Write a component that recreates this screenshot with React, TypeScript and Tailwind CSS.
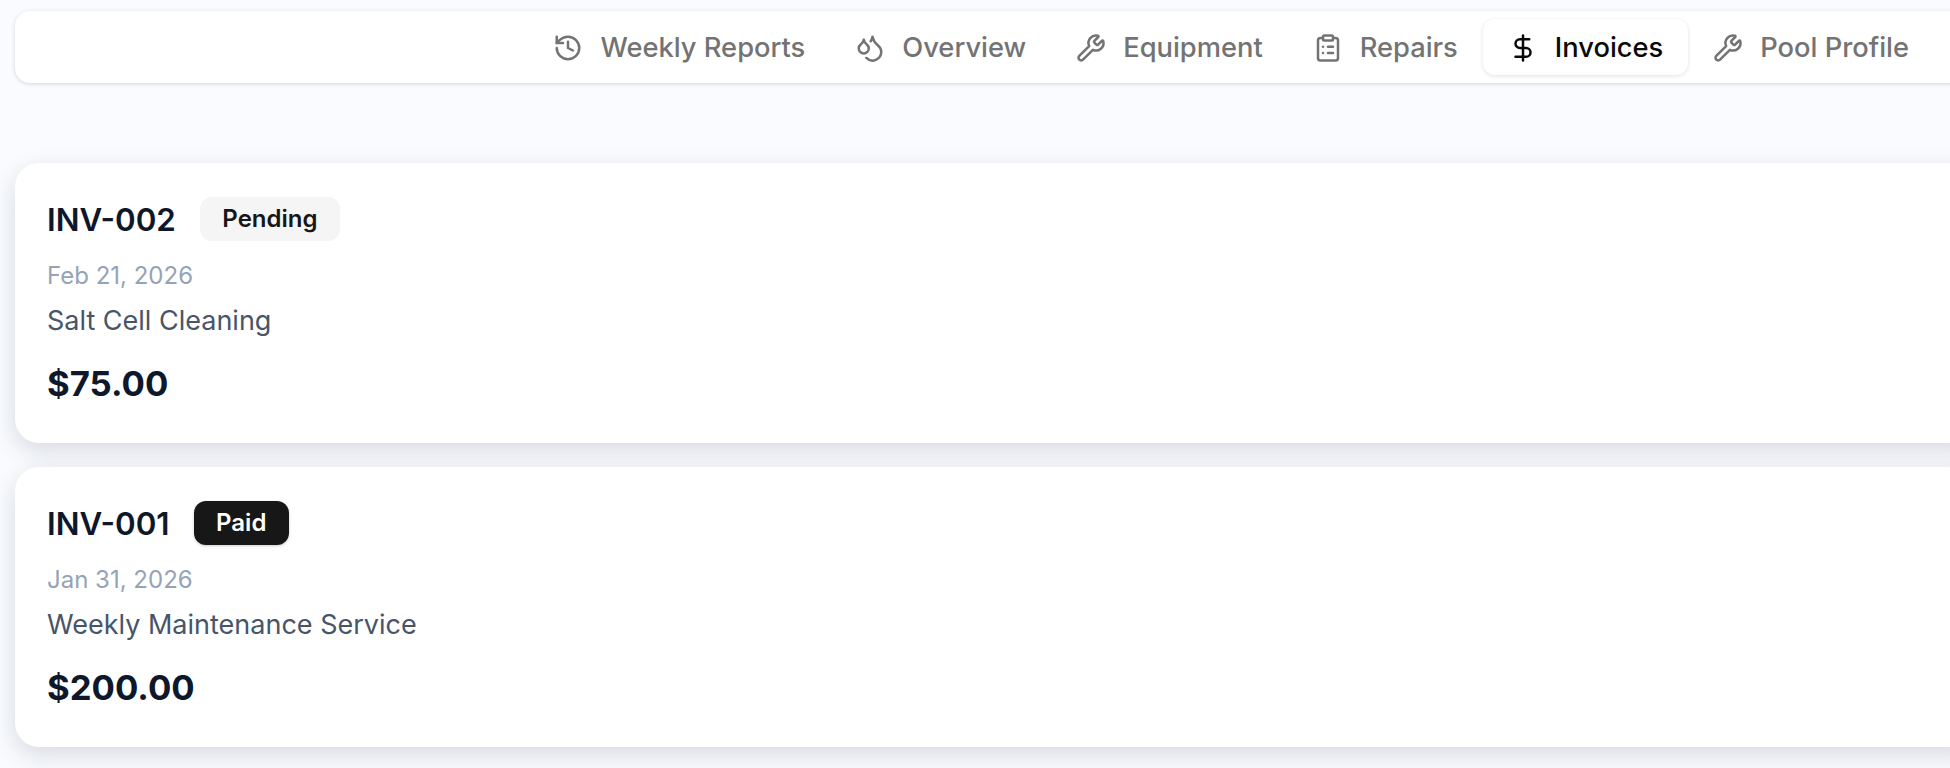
import { ClipboardList, DollarSign, Droplets, History, Wrench } from "lucide-react"

const tabs = [
  { label: "Weekly Reports", icon: History },
  { label: "Overview", icon: Droplets },
  { label: "Equipment", icon: Wrench },
  { label: "Repairs", icon: ClipboardList },
  { label: "Invoices", icon: DollarSign, active: true },
  { label: "Pool Profile", icon: Wrench },
]

const invoices = [
  { id: "INV-002", status: "Pending", date: "Feb 21, 2026", title: "Salt Cell Cleaning", amount: "$75.00" },
  { id: "INV-001", status: "Paid", date: "Jan 31, 2026", title: "Weekly Maintenance Service", amount: "$200.00" },
]

export default function App() {
  return (
    <div className="h-screen w-screen overflow-hidden bg-[#f9fbfe] font-['Inter',sans-serif]">
      <div className="w-[2000px] px-[15px] pt-[11px]">
        {/* Tabs */}
        <nav className="flex h-[72px] items-center justify-end rounded-[15px] bg-white pr-[51px] shadow-[0_1px_4px_rgba(15,23,42,0.16)]">
          {tabs.map((t) => (
            <button
              key={t.label}
              className={
                t.active
                  ? "flex h-[56px] items-center gap-[17px] rounded-[12px] bg-white px-[25px] pt-[2px] text-[27.3px] font-medium text-[#0a0a0a] shadow-[0_1px_4px_rgba(0,0,0,0.12)]"
                  : "flex h-[56px] items-center gap-[17px] rounded-[12px] px-[25px] pt-[2px] text-[27.3px] font-medium text-[#737373]"
              }
            >
              <t.icon className="h-[30px] w-[30px]" strokeWidth={2} />
              {t.label}
            </button>
          ))}
        </nav>

        {/* Invoices */}
        <div className="mt-[80px] flex flex-col gap-[24px]">
          {invoices.map((inv) => (
            <div
              key={inv.id}
              className="h-[280px] rounded-[24px] bg-white px-[32px] pt-[34px] shadow-[0_8px_24px_rgba(15,23,42,0.14)]"
            >
              <div className="flex h-[44px] items-start gap-[24px]">
                <span className="pt-[1px] text-[31.3px] font-semibold leading-[44px] text-[#0f172a]">{inv.id}</span>
                <span
                  className={
                    inv.status === "Paid"
                      ? "flex h-[44px] items-center rounded-[12px] bg-[#171717] px-[22.5px] text-[24px] font-semibold text-white shadow-[0_1px_3px_rgba(0,0,0,0.2)]"
                      : "flex h-[44px] items-center rounded-[12px] bg-[#f5f5f5] px-[22.5px] text-[24px] font-semibold text-[#171717]"
                  }
                >
                  {inv.status}
                </span>
              </div>
              <div className="mt-[20px] text-[24px] leading-[30px] text-[#94a3b8]">{inv.date}</div>
              <div className="mt-[12px] text-[27px] leading-[36px] text-[#475569]">{inv.title}</div>
              <div className="mt-[20px] text-[34.7px] font-bold leading-[48px] text-[#0f172a]">{inv.amount}</div>
            </div>
          ))}
        </div>
      </div>
    </div>
  )
}
